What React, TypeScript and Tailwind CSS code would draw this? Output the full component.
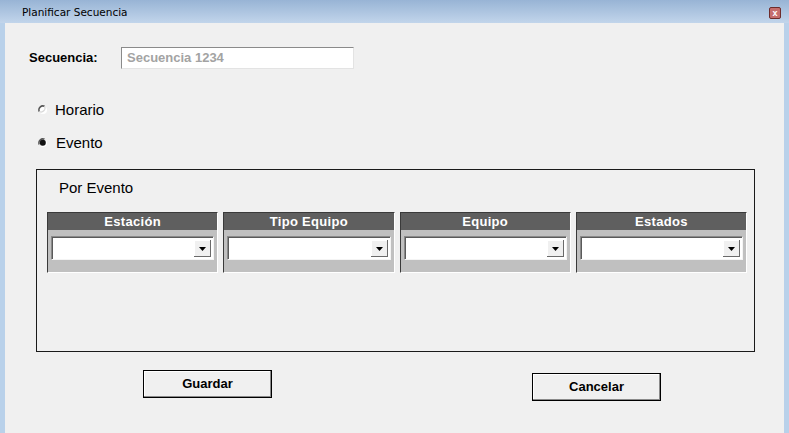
import React from "react";

const cols = ["Estación", "Tipo Equipo", "Equipo", "Estados"];

function Radio({ checked }: { checked?: boolean }) {
  return (
    <svg width="10" height="10" viewBox="0 0 10 10" className="block">
      <circle cx="5" cy="5" r="4" fill="#ffffff" />
      <path d="M1.3 6.6 A4 4 0 0 1 6.6 1.3" stroke="#555555" strokeWidth="1.5" fill="none" />
      <path d="M6.6 1.3 A4 4 0 0 1 1.3 6.6" stroke="#d8d8d8" strokeWidth="1.2" fill="none" />
      {checked && <circle cx="4.8" cy="4.8" r="3" fill="#111111" />}
    </svg>
  );
}

function Combo() {
  return (
    <div className="h-[24px] w-full bg-white border border-t-[#8a8a8a] border-l-[#8a8a8a] border-r-[#f4f4f4] border-b-[#f4f4f4] shadow-[inset_1px_1px_0_#5a5a5a] flex justify-end items-center pr-[2px] pt-[1px]">
      <div className="w-[17px] h-[17px] bg-[#f0f0f0] shadow-[inset_-1px_-1px_0_#6a6a6a,inset_1px_1px_0_#ffffff] flex items-center justify-center">
        <svg width="7" height="4" viewBox="0 0 7 4" className="block">
          <path d="M0 0 H7 L3.5 4 Z" fill="#000" />
        </svg>
      </div>
    </div>
  );
}

export default function App() {
  return (
    <div
      className="w-[789px] h-[433px] overflow-hidden flex flex-col bg-[#b9d1ea]"
      style={{ fontFamily: '"Liberation Sans", Arial, sans-serif' }}
    >
      {/* Title bar */}
      <div className="h-[23px] shrink-0 bg-gradient-to-b from-[#98b4d5] to-[#c2d5eb] flex items-center justify-between pl-[22px] pr-[8px]">
        <span className="text-[10.5px] text-black pt-[2px]" style={{ fontFamily: '"DejaVu Sans", "Liberation Sans", sans-serif' }}>
          Planificar Secuencia
        </span>
        <div className="w-[12px] h-[12px] mt-[3px] rounded-[2px] bg-[#c56d6d] border border-[#6e2c2c] flex items-center justify-center text-white text-[9px] font-bold leading-none">
          x
        </div>
      </div>

      {/* Body */}
      <div className="flex-1 flex">
        <div className="w-[5px] bg-[#b9d1ea]" />
        <div className="flex-1 bg-[#f0f0f0] flex flex-col">
          {/* Secuencia */}
          <div className="mt-[24px] ml-[24px] flex items-center">
            <span className="w-[92px] text-[13px] font-bold text-black">Secuencia:</span>
            <div className="w-[233px] h-[22px] bg-white border border-t-[#8a8a8a] border-l-[#8a8a8a] border-r-[#e3e3e3] border-b-[#e3e3e3] flex items-center pl-[5px]">
              <span className="text-[13px] font-bold text-[#a3a3a3]">Secuencia 1234</span>
            </div>
          </div>

          {/* Radios */}
          <div className="mt-[31px] ml-[33px] h-[20px] flex items-center gap-[7px]">
            <Radio />
            <span className="text-[15px] text-black">Horario</span>
          </div>
          <div className="mt-[13px] ml-[33px] h-[20px] flex items-center gap-[8px]">
            <Radio checked />
            <span className="text-[15px] text-black">Evento</span>
          </div>

          {/* Group box */}
          <div className="mt-[16px] ml-[31px] w-[719px] h-[183px] border border-[#1a1a1a] flex flex-col">
            <div className="mt-[9px] ml-[22px] h-[18px] flex items-center text-[15px] text-black">Por Evento</div>
            <div className="mt-[15px] ml-[10px] w-[700px] grid grid-cols-4 gap-[5px]">
              {cols.map((c) => (
                <div
                  key={c}
                  className="border border-t-[#3a3a3a] border-l-[#3a3a3a] border-r-white border-b-white flex flex-col"
                >
                  <div className="h-[17px] bg-[#5f5f5f] flex items-center justify-center text-white text-[13px] font-bold tracking-[0.3px]">
                    {c}
                  </div>
                  <div className="h-[42px] bg-[#c0c0c0] pt-[6px] px-[3px]">
                    <Combo />
                  </div>
                </div>
              ))}
            </div>
          </div>

          {/* Buttons */}
          <div className="mt-[18px] ml-[138px] flex items-start gap-[260px]">
            <div className="w-[129px] h-[28px] bg-[#f0f0f0] border border-black shadow-[inset_-1px_-1px_0_#8a8a8a,inset_1px_1px_0_#ffffff] flex items-center justify-center text-[13px] font-bold text-black">
              Guardar
            </div>
            <div className="mt-[3px] w-[129px] h-[28px] bg-[#f0f0f0] border border-black shadow-[inset_-1px_-1px_0_#8a8a8a,inset_1px_1px_0_#ffffff] flex items-center justify-center text-[13px] font-bold text-black">
              Cancelar
            </div>
          </div>
        </div>
        <div className="w-[5px] bg-[#b9d1ea]" />
      </div>
    </div>
  );
}
